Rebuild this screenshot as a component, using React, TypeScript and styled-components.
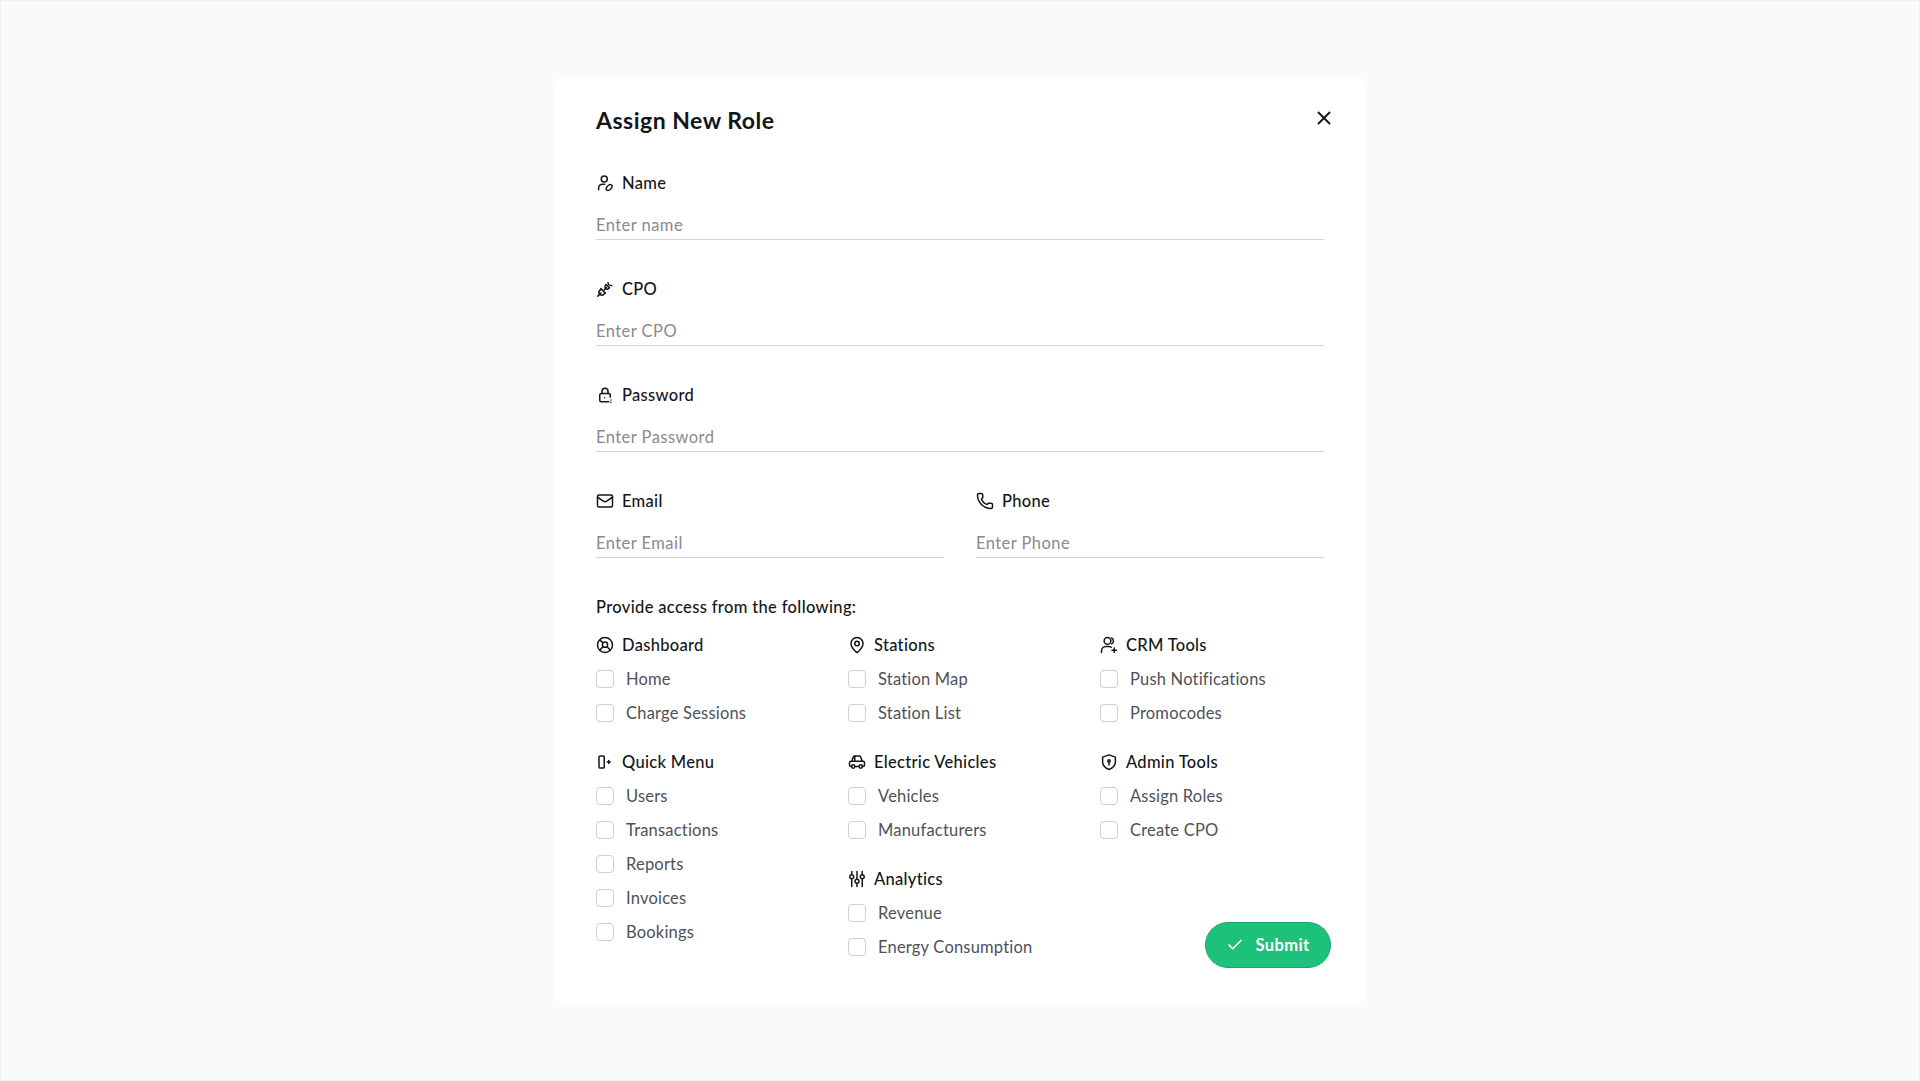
import React from 'react'
import styled, { createGlobalStyle } from 'styled-components'
import { Check, Mail, MapPin, Phone, X } from 'lucide-react'

const GlobalStyle = createGlobalStyle`
  * { box-sizing: border-box; }
  html, body { margin: 0; padding: 0; }
  body { font-family: "Lato", "Open Sans", sans-serif; background: #fafafa; }
`

const Page = styled.div`
  height: 1081px;
  padding-top: 75px;
  display: flex;
  justify-content: center;
  align-items: flex-start;
  background: #fafafa;
  border: 1px solid #f0f0f0;
`

const Modal = styled.form`
  width: 812px;
  height: 929px;
  padding: 26px 42px 0;
  background: #fff;
  border-radius: 12px;
  display: flex;
  flex-direction: column;
`

const Header = styled.div`
  display: flex;
  justify-content: space-between;
  align-items: flex-start;
  height: 37px;
  margin-bottom: 32px;
`

const Title = styled.h2`
  margin: 0;
  font-size: 23px;
  line-height: 37px;
  font-weight: 700;
  letter-spacing: 0.5px;
  color: #14161a;
`

const CloseButton = styled.button`
  border: 0;
  padding: 0;
  margin: 5px -11px 0 0;
  background: none;
  color: #1c1c1c;
  display: flex;
`

const Field = styled.div`
  display: flex;
  flex-direction: column;
  flex: 1;
  min-width: 0;
`

const FieldStack = styled.div`
  display: flex;
  flex-direction: column;
  gap: 37px;
`

const FieldRow = styled.div`
  display: flex;
  gap: 32px;
`

const Heading = styled.div`
  display: flex;
  align-items: center;
  gap: 8px;
  height: 24px;
  font-size: 16.5px;
  font-weight: 500;
  letter-spacing: 0.3px;
  color: #14161a;
  svg { width: 18px; height: 18px; flex: none; }
`

const TextInput = styled.input`
  height: 32px;
  margin-top: 13px;
  padding: 3px 0 0;
  width: 100%;
  border: 0;
  border-bottom: 1px solid #d4d4d4;
  outline: none;
  background: none;
  font: inherit;
  font-size: 16.5px;
  letter-spacing: 0.45px;
  color: #14161a;
  &::placeholder { color: #8a8a8a; opacity: 1; }
`

const AccessTitle = styled.div`
  margin-top: 37px;
  height: 24px;
  line-height: 24px;
  font-size: 16.5px;
  font-weight: 500;
  letter-spacing: 0.35px;
  color: #14161a;
`

const AccessGrid = styled.div`
  margin-top: 14px;
  display: grid;
  grid-template-columns: repeat(3, 252px);
`

const Column = styled.div`
  display: flex;
  flex-direction: column;
  gap: 25px;
`

const Group = styled.div`
  display: flex;
  flex-direction: column;
`

const Option = styled.label`
  display: flex;
  align-items: center;
  gap: 12px;
  height: 24px;
  margin-top: 10px;
  font-size: 16.5px;
  letter-spacing: 0.2px;
  color: #4f5157;
`

const Box = styled.input.attrs({ type: 'checkbox' })`
  appearance: none;
  margin: 0;
  width: 18px;
  height: 18px;
  background: #fff;
  border: 1px solid #cfcfcf;
  border-radius: 4px;
`

const SubmitButton = styled.button`
  margin: auto 21px -9px 0;
  align-self: flex-end;
  width: 126px;
  height: 46px;
  display: flex;
  align-items: center;
  justify-content: center;
  gap: 11px;
  border: 1px solid #1aa86a;
  border-radius: 23px;
  background: #1dc179;
  color: #fff;
  font: inherit;
  font-size: 16.5px;
  font-weight: 700;
  letter-spacing: 0.4px;
`

const stroke = {
  viewBox: '0 0 24 24',
  fill: 'none',
  stroke: 'currentColor',
  strokeWidth: 2,
  strokeLinecap: 'round' as const,
  strokeLinejoin: 'round' as const,
}

const NameIcon = () => (
  <svg {...stroke}>
    <circle cx="11" cy="6.5" r="4" />
    <path d="M3.5 21v-2.5a5 5 0 0 1 5-5h3" />
    <ellipse cx="17.5" cy="18" rx="4.6" ry="2.8" transform="rotate(-45 17.5 18)" />
  </svg>
)

const PlugIcon = () => (
  <svg {...stroke}>
    <path d="M2.5 21.5l4-4" />
    <path d="M6.5 11.5l6 6-2 1.5a3.5 3.5 0 0 1-5.5-5z" />
    <path d="M11 13l3-3" />
    <path d="M13.5 6l4.5 4.5-1 .8a2.8 2.8 0 0 1-4.2-4.2z" />
    <path d="M16 3.5l1 3 4 1" />
  </svg>
)

const LockIcon = () => (
  <svg {...stroke}>
    <path d="M8 10V7a4 4 0 0 1 8 0v3" />
    <path d="M17 21H7a2 2 0 0 1-2-2v-7a2 2 0 0 1 2-2h10a2 2 0 0 1 2 2v3" />
    <path d="M11.5 15.5h.01M20 18.5v.01M20 21.5v.01" />
  </svg>
)

const DashboardIcon = () => (
  <svg {...stroke}>
    <circle cx="12" cy="12" r="10" />
    <circle cx="12" cy="11.5" r="3.5" />
    <path d="M5 19l4.5-5M19 19l-4.5-5M5.5 5.5L9 9" />
  </svg>
)

const CrmIcon = () => (
  <svg {...stroke}>
    <circle cx="10" cy="6.5" r="4.5" />
    <path d="M15.5 2.5a4.5 4.5 0 0 1 0 8" />
    <path d="M2 22v-2a6 6 0 0 1 6-6h4a6 6 0 0 1 3 1" />
    <path d="M19 16v6M16 19h6" />
  </svg>
)

const QuickIcon = () => (
  <svg {...stroke}>
    <rect x="4" y="4" width="7" height="16" rx="1.5" />
    <path d="M15 12h4M17 10v4" />
  </svg>
)

const VehicleIcon = () => (
  <svg {...stroke}>
    <path d="M5 11l2-5.5A2 2 0 0 1 9 4h6a2 2 0 0 1 2 1.5L19 11" />
    <path d="M5 18H4a2 2 0 0 1-2-2v-3a2 2 0 0 1 2-2h16a2 2 0 0 1 2 2v3a2 2 0 0 1-2 2h-1" />
    <path d="M10 18h4M9 11V4" />
    <circle cx="7" cy="18" r="2.2" />
    <circle cx="17" cy="18" r="2.2" />
  </svg>
)

const SlidersIcon = () => (
  <svg {...stroke}>
    <path d="M5 2v4M5 12v10M12 2v10M12 18v4M19 2v4M19 12v10" />
    <circle cx="5" cy="9" r="2.6" />
    <circle cx="12" cy="15" r="2.6" />
    <circle cx="19" cy="9" r="2.6" />
  </svg>
)

const ShieldIcon = () => (
  <svg {...stroke}>
    <path d="M12 2.5l8.5 3v6c0 5.5-3.6 8.6-8.5 10.5-4.9-1.9-8.5-5-8.5-10.5v-6z" />
    <circle cx="12" cy="10.5" r="1.6" />
    <path d="M12 12.5v3.5" />
  </svg>
)

type GroupData = { title: string; icon: React.ReactNode; options: string[] }

const columns: GroupData[][] = [
  [
    { title: 'Dashboard', icon: <DashboardIcon />, options: ['Home', 'Charge Sessions'] },
    { title: 'Quick Menu', icon: <QuickIcon />, options: ['Users', 'Transactions', 'Reports', 'Invoices', 'Bookings'] },
  ],
  [
    { title: 'Stations', icon: <MapPin strokeWidth={2} />, options: ['Station Map', 'Station List'] },
    { title: 'Electric Vehicles', icon: <VehicleIcon />, options: ['Vehicles', 'Manufacturers'] },
    { title: 'Analytics', icon: <SlidersIcon />, options: ['Revenue', 'Energy Consumption'] },
  ],
  [
    { title: 'CRM Tools', icon: <CrmIcon />, options: ['Push Notifications', 'Promocodes'] },
    { title: 'Admin Tools', icon: <ShieldIcon />, options: ['Assign Roles', 'Create CPO'] },
  ],
]

const AccessGroup = ({ group }: { group: GroupData }) => (
  <Group>
    <Heading>
      {group.icon}
      {group.title}
    </Heading>
    {group.options.map((option) => (
      <Option key={option}>
        <Box />
        {option}
      </Option>
    ))}
  </Group>
)

const InputField = ({ icon, label, placeholder }: { icon: React.ReactNode; label: string; placeholder: string }) => (
  <Field>
    <Heading>
      {icon}
      {label}
    </Heading>
    <TextInput placeholder={placeholder} />
  </Field>
)

export default function App() {
  return (
    <Page>
      <GlobalStyle />
      <Modal onSubmit={(e) => e.preventDefault()}>
        <Header>
          <Title>Assign New Role</Title>
          <CloseButton type="button">
            <X size={22} strokeWidth={2.2} />
          </CloseButton>
        </Header>
        <FieldStack>
          <InputField icon={<NameIcon />} label="Name" placeholder="Enter name" />
          <InputField icon={<PlugIcon />} label="CPO" placeholder="Enter CPO" />
          <InputField icon={<LockIcon />} label="Password" placeholder="Enter Password" />
          <FieldRow>
            <InputField icon={<Mail />} label="Email" placeholder="Enter Email" />
            <InputField icon={<Phone />} label="Phone" placeholder="Enter Phone" />
          </FieldRow>
        </FieldStack>
        <AccessTitle>Provide access from the following:</AccessTitle>
        <AccessGrid>
          {columns.map((groups, i) => (
            <Column key={i}>
              {groups.map((group) => (
                <AccessGroup key={group.title} group={group} />
              ))}
              {i === 2 && (
                <SubmitButton type="submit">
                  <Check size={18} strokeWidth={2.2} />
                  Submit
                </SubmitButton>
              )}
            </Column>
          ))}
        </AccessGrid>
      </Modal>
    </Page>
  )
}
